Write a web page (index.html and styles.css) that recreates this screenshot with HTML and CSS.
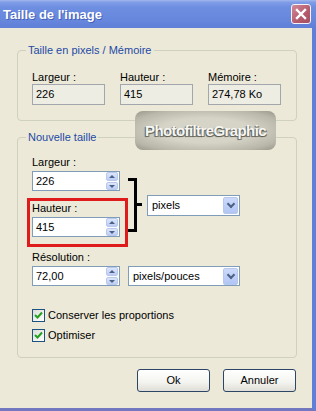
FILE: index.html
```html
<!DOCTYPE html>
<html lang="fr">
<head>
    <meta charset="UTF-8">
    <meta name="viewport" content="width=device-width, initial-scale=1.0">
    <title>Taille de l'image</title>
    <link rel="stylesheet" href="styles.css">
</head>
<body>
    <div class="window">
        <div class="titlebar">
            <span class="title">Taille de l'image</span>
            <span class="close">
                <svg width="12" height="12" viewBox="0 0 12 12"><path d="M2 2 L10 10 M10 2 L2 10" stroke="#fff" stroke-width="2.4" stroke-linecap="square"/></svg>
            </span>
        </div>

        <div class="client">
            <fieldset class="group">
                <legend>Taille en pixels / Mémoire</legend>
                <div class="group-body info-body">
                    <div class="info-grid">
                        <div>
                            <div class="lbl">Largeur :</div>
                            <div class="ro">226</div>
                        </div>
                        <div>
                            <div class="lbl">Hauteur :</div>
                            <div class="ro">415</div>
                        </div>
                        <div>
                            <div class="lbl">Mémoire :</div>
                            <div class="ro">274,78 Ko</div>
                        </div>
                    </div>
                </div>
            </fieldset>

            <fieldset class="group new-size">
                <legend>Nouvelle taille</legend>
                <div class="group-body size-body">
                    <div class="dims">
                        <div class="dims-fields">
                            <div class="lbl">Largeur :</div>
                            <div class="spin"><span>226</span><span class="spin-btns"><span class="sb up"></span><span class="sb down"></span></span></div>
                            <div class="mark">
                                <div class="lbl">Hauteur :</div>
                                <div class="spin"><span>415</span><span class="spin-btns"><span class="sb up"></span><span class="sb down"></span></span></div>
                            </div>
                        </div>
                        <div class="bracket"></div>
                        <div class="tick"></div>
                        <div class="combo combo-unit"><span>pixels</span><span class="drop"></span></div>
                    </div>

                    <div class="lbl res-lbl">Résolution :</div>
                    <div class="res-row">
                        <div class="spin"><span>72,00</span><span class="spin-btns"><span class="sb up"></span><span class="sb down"></span></span></div>
                        <div class="combo combo-res"><span>pixels/pouces</span><span class="drop"></span></div>
                    </div>

                    <div class="checks">
                        <label class="check"><span class="box"><svg width="9" height="9" viewBox="0 0 9 9"><path d="M1 4 L3.5 6.5 L8 1.5" fill="none" stroke="#21A121" stroke-width="2"/></svg></span>Conserver les proportions</label>
                        <label class="check"><span class="box"><svg width="9" height="9" viewBox="0 0 9 9"><path d="M1 4 L3.5 6.5 L8 1.5" fill="none" stroke="#21A121" stroke-width="2"/></svg></span>Optimiser</label>
                    </div>
                </div>
            </fieldset>

            <div class="buttons">
                <span class="btn">Ok</span>
                <span class="btn">Annuler</span>
            </div>

            <div class="watermark">PhotofiltreGraphic</div>
        </div>
    </div>
</body>
</html>
```

FILE: styles.css
```css
* {
    box-sizing: border-box;
}
body {
    margin: 0;
    font-family: "Liberation Sans", Arial, sans-serif;
    font-size: 11px;
    line-height: 13px;
    color: #000;
    background: #ECE9D8;
}
.window {
    width: 316px;
    height: 411px;
    display: flex;
    flex-direction: column;
}
.titlebar {
    height: 28px;
    display: flex;
    align-items: center;
    justify-content: space-between;
    padding: 0 5px 0 3px;
    background: linear-gradient(#A3B8EE 0, #819EE6 2px, #6E8EE1 7px, #6787DD 20px, #5F7FD8 28px);
}
.title {
    font-weight: bold;
    font-size: 13px;
    color: #fff;
    text-shadow: 1px 1px 0 #4460B8;
}
.close {
    width: 20px;
    height: 20px;
    border: 1px solid #F2F2F8;
    border-radius: 3px;
    background: linear-gradient(135deg, #D28A98, #B45A6C 60%, #A84E62);
    display: flex;
    align-items: center;
    justify-content: center;
}
.client {
    flex: 1;
    position: relative;
    background: #ECE9D8;
    border-right: 4px solid #5F7FD8;
    border-bottom: 3px solid #7377C0;
    padding: 16px 15px 0 17px;
}
.group {
    margin: 0;
    padding: 0;
    border: 1px solid #D0D0BF;
    border-radius: 4px;
    min-width: 0;
}
.group legend {
    margin-left: 8px;
    padding: 0 2px;
    color: #1E4AA6;
    line-height: 13px;
}
.group-body {
    padding-left: 14px;
}
.info-body {
    padding-top: 14px;
    padding-bottom: 15px;
}
.info-grid {
    display: grid;
    grid-template-columns: 73px 73px 73px;
    column-gap: 15px;
}
.lbl {
    line-height: 13px;
}
.ro {
    height: 21px;
    border: 1px solid #A3A6AC;
    background: #EEEDE4;
    padding: 3px 0 0 3px;
}
.new-size {
    margin-top: 10px;
}
.size-body {
    padding-top: 12px;
    padding-bottom: 15px;
}
.dims {
    display: flex;
    align-items: flex-start;
}
.dims-fields {
    width: 88px;
}
.spin {
    width: 88px;
    height: 20px;
    margin-top: 2px;
    border: 1px solid #7F9DB9;
    background: #fff;
    display: flex;
    align-items: center;
    padding: 0 1px 0 3px;
}
.spin-btns {
    margin-left: auto;
    width: 12px;
    height: 18px;
    display: flex;
    flex-direction: column;
    gap: 1px;
}
.sb {
    flex: 1;
    border: 1px solid #B9C9EE;
    border-radius: 2px;
    background: linear-gradient(#DCE6FC, #BCCDF4);
    position: relative;
}
.sb::after {
    content: "";
    position: absolute;
    left: 2px;
    top: 2px;
    border-left: 3px solid transparent;
    border-right: 3px solid transparent;
}
.sb.up::after {
    border-bottom: 3px solid #4D6185;
}
.sb.down::after {
    top: 2px;
    border-top: 3px solid #4D6185;
}
.mark {
    margin: 7px -8px 0 -5px;
    border: 3px solid #E01B1B;
    padding: 1px 5px 7px 2px;
}
.bracket {
    width: 9px;
    height: 54px;
    margin: 22px 0 0 8px;
    border: 3px solid #000;
    border-left: none;
}
.tick {
    width: 5px;
    height: 3px;
    margin-top: 47px;
    background: #000;
}
.combo {
    height: 21px;
    border: 1px solid #7F9DB9;
    background: #fff;
    display: flex;
    align-items: center;
    padding: 1px 1px 1px 4px;
}
.combo-unit {
    width: 93px;
    margin: 39px 0 0 5px;
}
.drop {
    margin-left: auto;
    width: 15px;
    height: 17px;
    border-radius: 2px;
    border: 1px solid #B6C8EF;
    background: linear-gradient(#CCDAFA, #B2C6F4);
    position: relative;
}
.drop::after {
    content: "";
    position: absolute;
    left: 4px;
    top: 3px;
    width: 4px;
    height: 4px;
    border-right: 2px solid #4D6185;
    border-bottom: 2px solid #4D6185;
    transform: rotate(45deg);
}
.res-lbl {
    margin-top: 4px;
}
.res-row {
    display: flex;
    gap: 8px;
}
.combo-res {
    width: 112px;
    margin-top: 0;
}
.res-row .spin {
    margin-top: 2px;
}
.res-row .combo {
    margin-top: 2px;
    height: 20px;
}
.checks {
    margin-top: 23px;
    display: flex;
    flex-direction: column;
    gap: 7px;
}
.check {
    display: flex;
    align-items: center;
    height: 13px;
}
.box {
    width: 13px;
    height: 13px;
    margin-right: 3px;
    border: 1px solid #1C5180;
    background: linear-gradient(135deg, #DCDCD7, #FFFFFF);
    display: flex;
    align-items: center;
    justify-content: center;
}
.buttons {
    margin-top: 11px;
    display: flex;
    justify-content: flex-end;
    gap: 13px;
    padding-right: 1px;
}
.btn {
    width: 73px;
    height: 23px;
    border: 1px solid #2E4666;
    border-radius: 3px;
    background: linear-gradient(#FFFFFF, #F3F3EF 60%, #DEDDD6);
    display: flex;
    align-items: center;
    justify-content: center;
}
.watermark {
    position: absolute;
    left: 135px;
    top: 83px;
    width: 141px;
    height: 39px;
    border-radius: 8px;
    background: radial-gradient(ellipse at center, #D6D4C6 45%, #B9B7A9 80%, #98958A 100%);
    color: #F6F6F2;
    font-weight: bold;
    font-size: 15px;
    letter-spacing: -0.6px;
    display: flex;
    align-items: center;
    justify-content: center;
    text-shadow: -1px 1px 1px #5A584E, 1px 1px 0 #7A786C;
}
```
